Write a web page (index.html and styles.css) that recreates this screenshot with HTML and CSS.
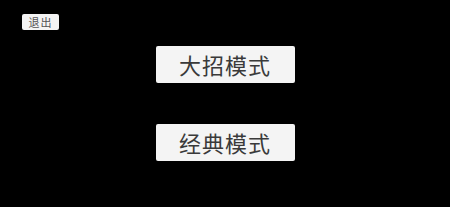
FILE: index.html
```html
<!DOCTYPE html>
<html lang="zh">
<head>
    <meta charset="UTF-8">
    <title>模式选择</title>
    <link rel="stylesheet" href="styles.css">
</head>
<body>
    <div class="screen">
        <div class="top-bar">
            <button type="button" class="btn-exit">退出</button>
        </div>
        <div class="mode-list">
            <button type="button" class="btn-mode">大招模式</button>
            <button type="button" class="btn-mode">经典模式</button>
        </div>
    </div>
</body>
</html>
```

FILE: styles.css
```css
body {
    margin: 0;
    background-color: #000;
    font-family: "Noto Sans CJK SC", "Liberation Sans", sans-serif;
}

.screen {
    width: 450px;
    height: 207px;
    background-color: #000;
}

.top-bar {
    padding: 14px 0 0 22px;
    height: 16px;
}

.btn-exit {
    display: block;
    width: 37px;
    height: 16px;
    padding: 0;
    border: none;
    border-radius: 2px;
    background-color: #f4f4f4;
    color: #555;
    font-family: inherit;
    font-size: 11px;
    letter-spacing: 1px;
    line-height: 16px;
}

.mode-list {
    display: flex;
    flex-direction: column;
    align-items: center;
    gap: 41px;
    margin-top: 16px;
}

.btn-mode {
    width: 139px;
    height: 37px;
    padding: 0;
    border: none;
    border-radius: 2px;
    background-color: #f4f4f4;
    color: #3a3a3a;
    font-family: inherit;
    font-size: 22px;
    letter-spacing: 1px;
    line-height: 37px;
}
```
